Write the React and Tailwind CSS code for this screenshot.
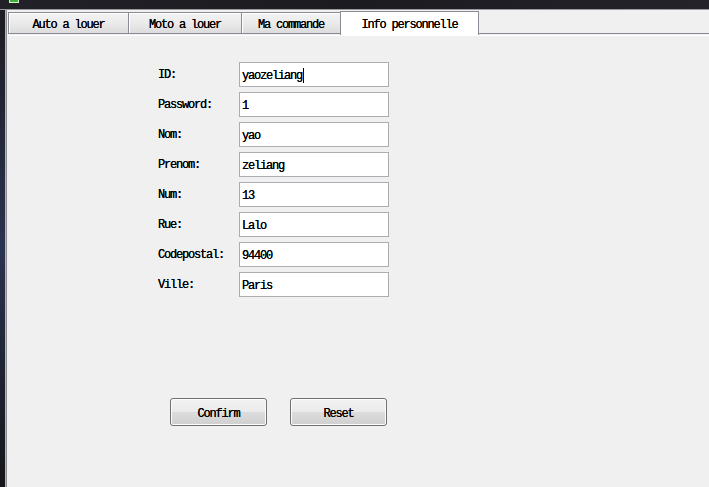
import React from "react";

const font = { fontFamily: '"Liberation Mono", "DejaVu Sans Mono", monospace' };

const fields = [
  ["ID:", "yaozeliang", true],
  ["Password:", "1"],
  ["Nom:", "yao"],
  ["Prenom:", "zeliang"],
  ["Num:", "13"],
  ["Rue:", "Lalo"],
  ["Codepostal:", "94400"],
  ["Ville:", "Paris"],
];

function Tab({ label, w }) {
  return (
    <div
      className={`h-[22px] mb-[1px] flex items-center justify-center border-t border-b border-l border-[#898c95] bg-gradient-to-b from-[#f3f3f3] via-[#ebebeb] to-[#dcdcdc] shadow-[inset_1px_1px_0_#ffffff] text-black ${w}`}
    >
      <span className="pt-[4px]">{label}</span>
    </div>
  );
}

export default function App() {
  return (
    <div
      className="w-[709px] h-[487px] overflow-hidden flex flex-col bg-[#f0f0f0] text-[12px] tracking-[-1.2px] text-black [text-shadow:0_0_0.3px_#000]"
      style={font}
    >
      {/* window title strip */}
      <div className="h-[10px] shrink-0 bg-gradient-to-r from-[#222127] via-[#1c1b20] to-[#24232a] border-b border-[#9a9a9e] relative">
        <div className="absolute left-[9px] top-0 w-[10px] h-[3px] bg-[#3fae3a] border-x border-b border-[#d8f0d0]" />
      </div>
      <div className="flex flex-1 min-h-0">
        {/* left frame */}
        <div className="w-[5px] shrink-0 bg-gradient-to-b from-[#1d1c22] via-[#2a3350] to-[#15161a]" />
        <div className="w-[1px] shrink-0 bg-[#b4b4b8]" />
        <div className="w-[1px] shrink-0 bg-[#8e8e92]" />
        <div className="flex-1 flex flex-col min-w-0">
          {/* tab strip */}
          <div className="h-[25px] shrink-0 flex items-end pl-[1px]">
            <Tab label="Auto a louer" w="w-[120px]" />
            <Tab label="Moto a louer" w="w-[113px]" />
            <Tab label="Ma commande" w="w-[99px]" />
            <div className="w-[139px] h-[24px] flex items-start justify-center pt-[4px] bg-white border-l border-t border-r border-[#898c95]">
              Info personnelle
            </div>
            <div className="flex-1 mb-[1px] border-b border-[#898c95]" />
          </div>
          {/* panel */}
          <div className="flex-1 flex flex-col bg-[#f0f0f0] border-t border-white">
            <div className="flex flex-col gap-[5px] pl-[151px] pt-[26px]">
              {fields.map(([label, value, caret]) => (
                <div key={label} className="flex items-center h-[25px]">
                  <div className="w-[81px] pt-[1px]">{label}</div>
                  <div className="w-[150px] h-[25px] bg-white border border-[#abadb3] flex items-center pl-[2px] pt-[2px]">
                    <span>{value}</span>
                    {caret && <span className="w-[1px] h-[15px] bg-black ml-[1px]" />}
                  </div>
                </div>
              ))}
            </div>
            <div className="flex gap-[23px] pl-[163px] mt-[101px]">
              {["Confirm", "Reset"].map((b) => (
                <div
                  key={b}
                  className="w-[97px] h-[28px] rounded-[3px] border border-[#707070] flex items-center justify-center pt-[3px] bg-[linear-gradient(to_bottom,#f2f2f2_0%,#ebebeb_50%,#dddddd_50%,#cfcfcf_100%)] shadow-[inset_0_0_0_1px_#fcfcfc]"
                >
                  {b}
                </div>
              ))}
            </div>
          </div>
        </div>
      </div>
    </div>
  );
}
